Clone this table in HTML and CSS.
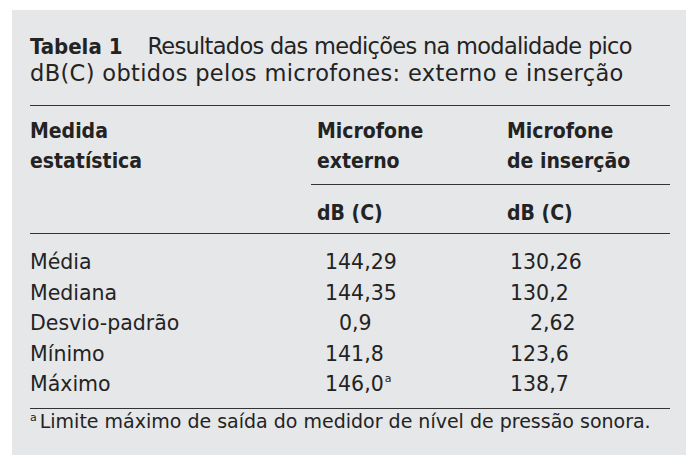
FILE: index.html
```html
<!DOCTYPE html>
<html lang="pt">
<head>
<meta charset="utf-8">
<title>Tabela 1</title>
<link rel="stylesheet" href="styles.css">
</head>
<body>
<div class="card">
  <p class="caption"><b class="label">Tabela 1</b><span class="gap"></span><span class="line1">Resultados das medições na modalidade pico</span><br><span class="line2">dB(C) obtidos pelos microfones: externo e inserção</span></p>
  <table class="data">
    <colgroup>
      <col class="col1">
      <col class="col2">
      <col class="col3">
    </colgroup>
    <thead>
      <tr class="h1">
        <th rowspan="2">Medida<br>estatística</th>
        <th class="c2 under">Microfone<br>externo</th>
        <th class="c3 under">Microfone<br>de inserção</th>
      </tr>
      <tr class="h2">
        <th class="c2">dB (C)</th>
        <th class="c3">dB (C)</th>
      </tr>
    </thead>
    <tbody>
      <tr class="first"><td>Média</td><td class="c2 num">144,29</td><td class="c3 num">130,26</td></tr>
      <tr><td>Mediana</td><td class="c2 num">144,35</td><td class="c3 num">130,2</td></tr>
      <tr><td>Desvio-padrão</td><td class="c2 num ind">0,9</td><td class="c3 num ind">2,62</td></tr>
      <tr><td>Mínimo</td><td class="c2 num">141,8</td><td class="c3 num">123,6</td></tr>
      <tr class="last"><td>Máximo</td><td class="c2 num">146,0<sup class="sup">a</sup></td><td class="c3 num">138,7</td></tr>
    </tbody>
  </table>
  <p class="note"><sup class="nsup">a</sup>Limite máximo de saída do medidor de nível de pressão sonora.</p>
</div>
</body>
</html>
```
FILE: styles.css
```css
html, body {
  margin: 0;
  padding: 0;
  background: #ffffff;
}
body {
  font-family: "DejaVu Sans", sans-serif;
  color: #232323;
}
.card {
  box-sizing: border-box;
  margin: 10px 0 0 12px;
  width: 674px;
  height: 445px;
  background: #e6e7e9;
  padding: 23px 16px 0 18px;
}
.caption {
  margin: 0;
  font-size: 22.5px;
  line-height: 26px;
}
.line1 { letter-spacing: -0.7px; }
.line2 { letter-spacing: 0.36px; }
.label {
  font-family: "DejaVu Sans Condensed", "DejaVu Sans", sans-serif;
  font-weight: bold;
  font-size: 22px;
}
.gap {
  display: inline-block;
  width: 25px;
}
.data {
  margin-top: 19px;
  width: 640px;
  table-layout: fixed;
  border-collapse: collapse;
  border-top: 1.5px solid #333;
  border-bottom: 1.5px solid #333;
  font-size: 20.5px;
}
.col1 { width: 281px; }
.col2 { width: 190px; }
.col3 { width: 169px; }
.data th, .data td {
  padding: 0;
  text-align: left;
  vertical-align: top;
  white-space: nowrap;
}
.data th {
  font-family: "DejaVu Sans Condensed", "DejaVu Sans", sans-serif;
  font-weight: bold;
  font-size: 21px;
  line-height: 30px;
}
.data td {
  line-height: 30.6px;
}
.data .c2 { padding-left: 6px; }
.data .c3 { padding-left: 6px; }
.data .c2.num { padding-left: 14px; }
.data .c3.num { padding-left: 9px; }
.data .c2.num.ind { padding-left: 28px; }
.data .c3.num.ind { padding-left: 29px; }
.h1 th { padding-top: 10px; padding-bottom: 8px; }
.h1 th.under { border-bottom: 1.5px solid #333; }
.h2 th { padding-top: 13px; padding-bottom: 5px; }
.data tbody tr.first td { padding-top: 13px; }
.data tbody tr.last td { padding-bottom: 8px; }
thead { border-bottom: 1.5px solid #333; }
.sup {
  font-size: 11px;
  vertical-align: 9px;
  line-height: 0;
  margin-left: 1px;
}
.note {
  margin: 0;
  font-size: 19px;
  line-height: 24px;
}
.nsup {
  font-size: 11px;
  vertical-align: 7px;
  line-height: 0;
  margin-right: 3px;
}
```
